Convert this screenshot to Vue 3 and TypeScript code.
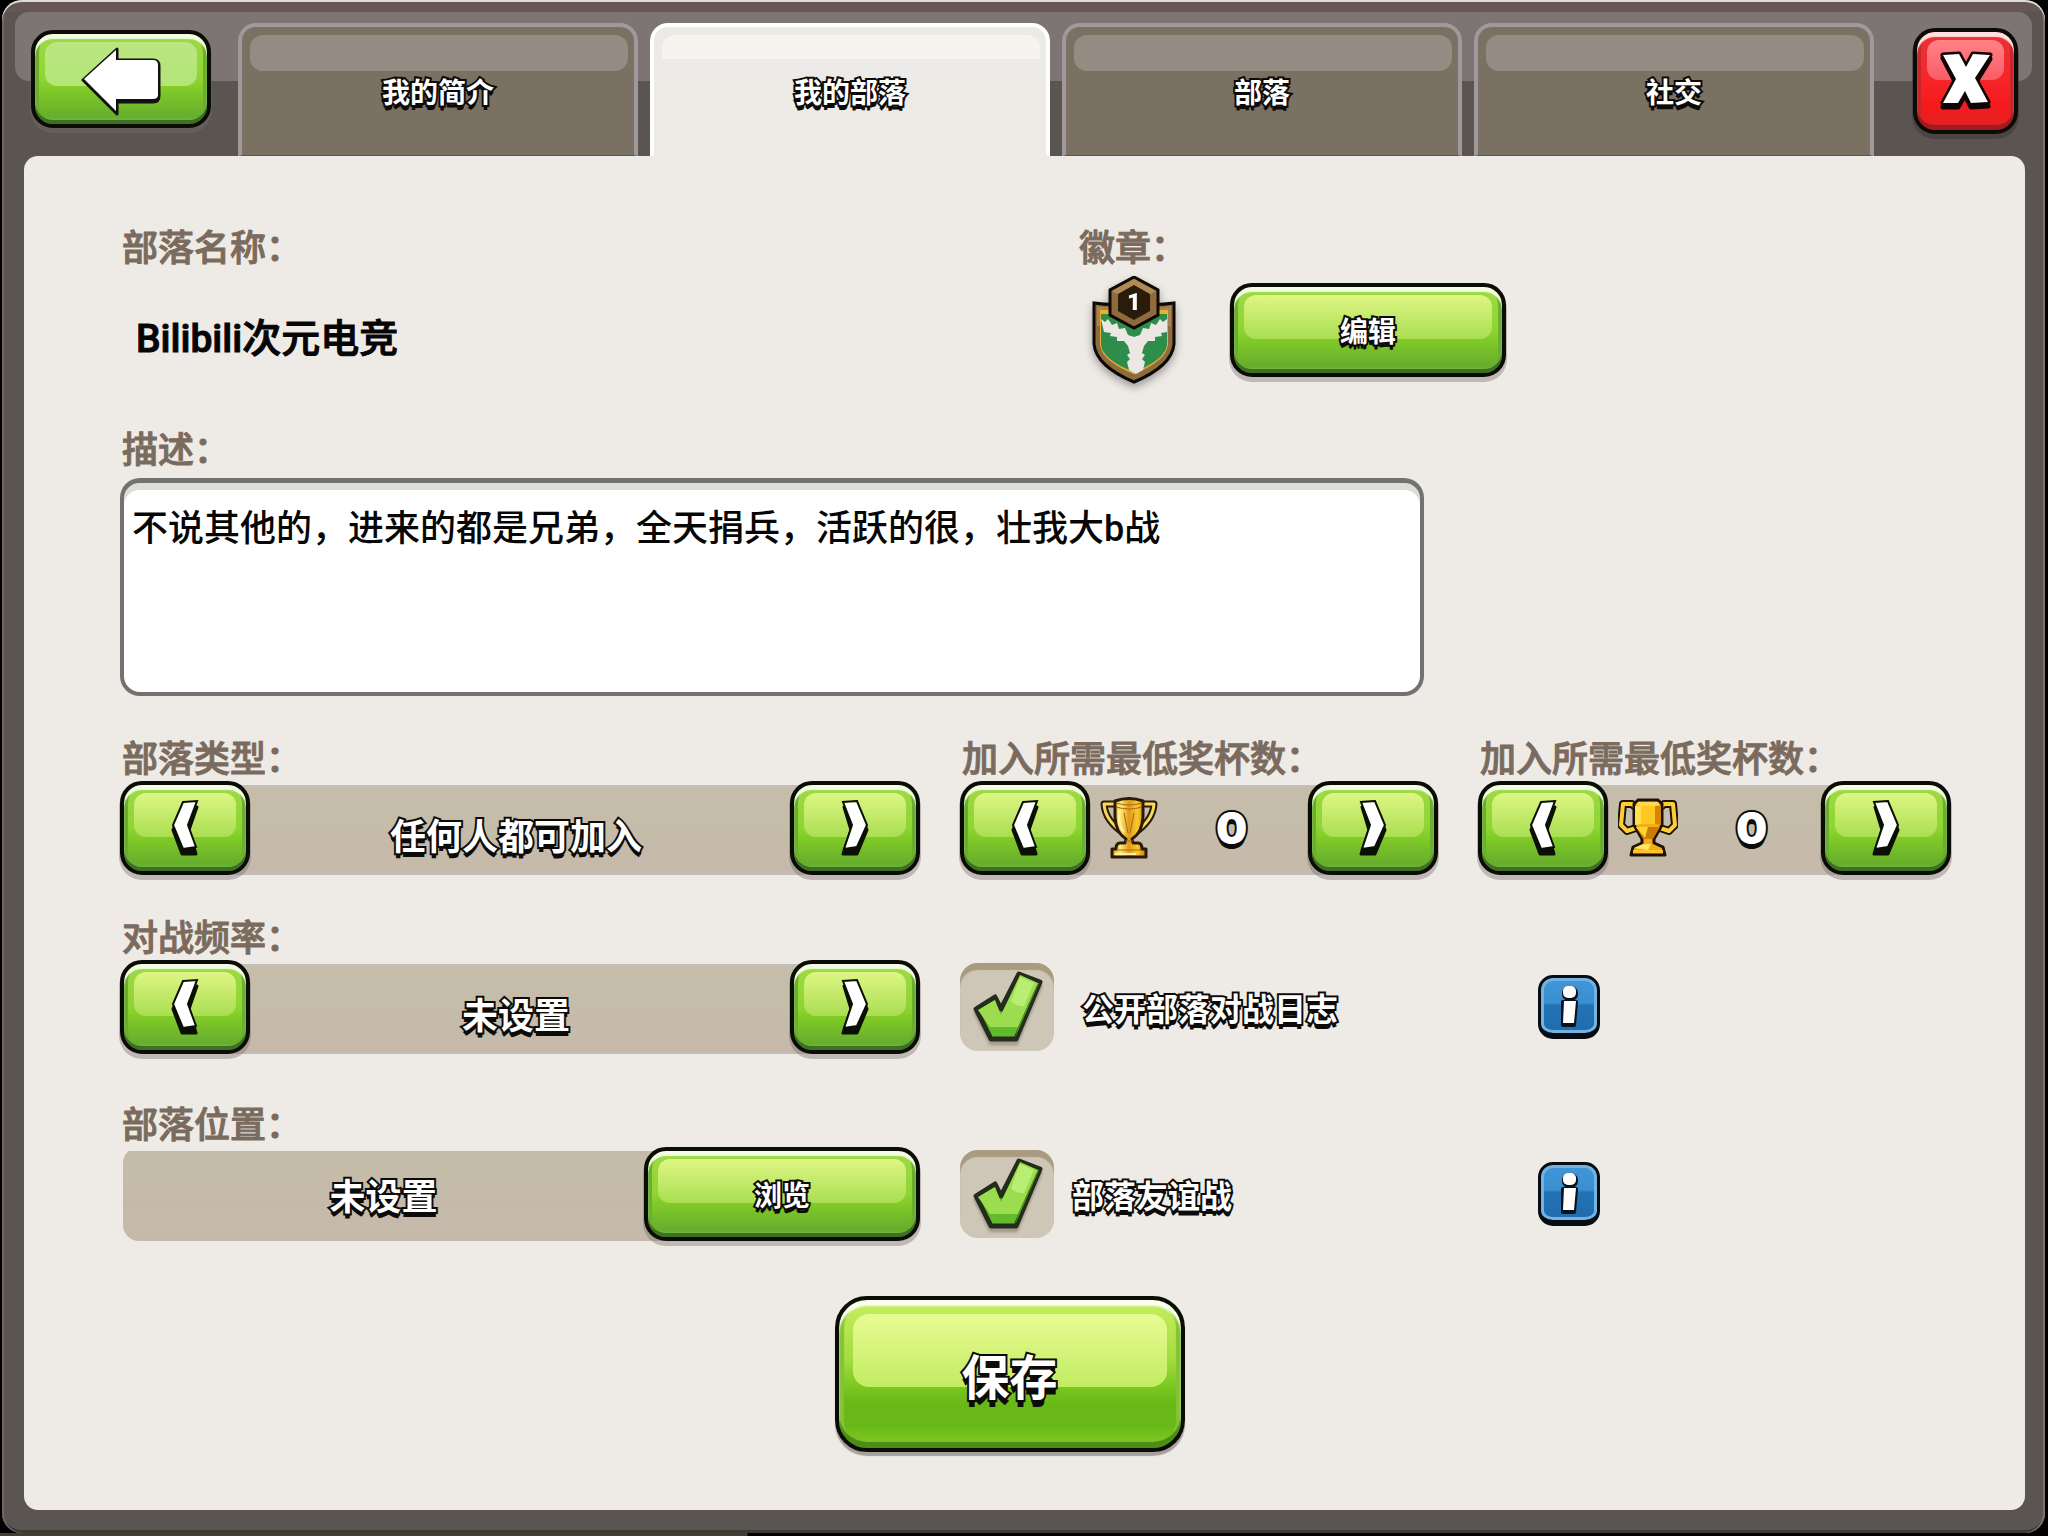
<script setup lang="ts">
import { computed, ref } from 'vue'

const tabs = ['我的简介', '我的部落', '部落', '社交']
const activeTab = ref(1)

const clanName = ref('Bilibili次元电竞')
const description = ref('不说其他的，进来的都是兄弟，全天捐兵，活跃的很，壮我大b战')

const clanTypes = ['任何人都可加入', '只有被批准才能加入', '不可加入']
const warFrequencies = ['未设置', '始终', '每周两次', '每周一次', '很少', '从不']
const typeIndex = ref(0)
const warIndex = ref(0)
const homeTrophies = ref(0)
const builderTrophies = ref(0)
const clanLocation = ref('未设置')
const publicWarLog = ref(true)
const friendlyWar = ref(true)

const clanType = computed(() => clanTypes[typeIndex.value])
const warFrequency = computed(() => warFrequencies[warIndex.value])

function cycle(index: number, step: number, length: number): number {
  return (index + step + length) % length
}
function stepTrophies(value: number, step: number): number {
  return Math.max(0, value + step * 100)
}
</script>

<template>
  <div class="page">
    <svg class="sprite" width="0" height="0" aria-hidden="true">
      <symbol id="chevron-left" viewBox="0 0 30 58">
        <path d="M12 8H27L19 31 26 55H12L3 31z" fill="#0b0f06" stroke="#0b0f06" stroke-width="3" stroke-linejoin="round" />
        <path d="M13 3 27 2 18 26 26 48 13 50 3 26z" fill="#fff" stroke="#0b0f06" stroke-width="2" />
      </symbol>
      <symbol id="chevron-right" viewBox="0 0 30 58">
        <path d="M18 8H4L11 31 3 55H17L27 31z" fill="#0b0f06" stroke="#0b0f06" stroke-width="3" stroke-linejoin="round" />
        <path d="M17 2 3 3 12 26 4 50 17 48 27 26z" fill="#fff" stroke="#0b0f06" stroke-width="2" />
      </symbol>
      <symbol id="check" viewBox="0 0 94 88">
        <path d="M59 11 80 19 56 76H31L16 46 35 34 41 46z" fill="#62bb2c" stroke="#262c1c" stroke-width="5" stroke-linejoin="round" />
        <path d="M60 12 78 20 58 64H30L18 47 35 37 41 52z" fill="#9bdd4e" />
        <path d="M60 14 74 20 64 43Q56 44 51 38z" fill="#b8ee74" />
        <path d="M78 20 58 64 55 75 79 20z" fill="#4f9a22" />
      </symbol>
      <symbol id="info-mark" viewBox="0 0 20 44">
        <g fill="#0b1118" stroke="#0b1118" stroke-width="4">
          <rect x="5" y="4" width="12" height="11" rx="5" />
          <path d="M4 18H17L15 41H4z" stroke-linejoin="round" />
        </g>
        <rect x="4" y="2" width="13" height="12" rx="5" fill="#fff" />
        <path d="M5 17H17L15 39H4z" fill="#fff" />
      </symbol>
    </svg>

    <div class="frame">
      <header class="header">
        <button type="button" class="btn back" aria-label="返回">
          <svg width="80" height="76" viewBox="0 -6 80 76" aria-hidden="true">
            <path d="M2 33 36 2v11h36q6 0 6 6v30q0 6-6 6H36v12z" fill="#111" stroke="#111" stroke-width="3" stroke-linejoin="round" />
            <path d="M3 32 35 3v10h37q5 0 5 5v30q0 4-5 4H35v12z" fill="#fff" />
          </svg>
        </button>
        <nav class="tabs" role="tablist">
          <button
            v-for="(tab, i) in tabs"
            :key="tab"
            type="button"
            role="tab"
            class="tab"
            :class="{ active: i === activeTab }"
            :aria-selected="i === activeTab"
            @click="activeTab = i"
          >
            <span class="outlined small">{{ tab }}</span>
          </button>
        </nav>
        <button type="button" class="btn close" aria-label="关闭">
          <svg width="54" height="60" viewBox="0 0 54 60" aria-hidden="true">
            <path d="M4 7 20 7 27 19 34 7 51 8 37 31 49 55 32 56 26 44 19 56 4 56 17 32z" fill="#100404" stroke="#100404" stroke-width="5" stroke-linejoin="round" />
            <path d="M4 4 20 3 27 16 34 3 51 4 36 27 49 51 32 52 26 40 19 52 4 52 17 28z" fill="#fff" stroke="#100404" stroke-width="5" stroke-linejoin="round" paint-order="stroke" />
          </svg>
        </button>
      </header>

      <main class="panel">
        <div class="identity">
          <div>
            <label class="label" for="clan-name">部落名称：</label>
            <input id="clan-name" v-model="clanName" class="name" type="text" />
          </div>
          <div>
            <div class="label">徽章：</div>
            <div class="badge-row">
              <svg class="badge" width="84" height="108" viewBox="0 0 84 108" aria-hidden="true">
                <path d="M2 27Q22 30 42 27 62 30 82 27V68Q80 90 42 106 4 90 2 68z" fill="#8e6c3e" stroke="#0d0a06" stroke-width="3" />
                <path d="M5 30Q22 33 42 31 62 33 79 30V50H5z" fill="#a8834f" />
                <path d="M8 34H76V69Q74 85 42 98 10 85 8 69z" fill="#e9b032" />
                <path d="M9 38H75V69Q73 84 42 96 11 84 9 69z" fill="#2f8d4b" />
                <path d="M9 43l4 3 3-3 4 6 5-2 2 6 6-1 3 7 6 2 6-2 3-7 6 1 2-6 5 2 4-6 3 3 4-3v13l-6 1 1 3-7 1 0 4-7 0-4 5-2 7 3 2-3 4 3 3-2 8-7 4-7-4-2-8 3-3-3-4 3-2-2-7-4-5-7 0 0-4-7-1 1-3-7-1z" fill="#ece7e5" />
                <path d="M42 1 66 14V39L42 52 18 39V14z" fill="#8f6a3c" stroke="#0d0a06" stroke-width="3" />
                <path d="M42 3 64 15 57 19 42 10 27 19 20 15z" fill="#b08a56" />
                <path d="M42 9 58 18V35L42 44 26 35V18z" fill="#2a1b0b" />
                <text x="42" y="34" text-anchor="middle" class="badge-level">1</text>
              </svg>
              <button type="button" class="btn medium"><span class="outlined small">编辑</span></button>
            </div>
          </div>
        </div>

        <div class="description">
          <label class="label" for="clan-description">描述：</label>
          <textarea id="clan-description" v-model="description" class="text-area"></textarea>
        </div>

        <div class="columns types">
          <div role="group" aria-labelledby="type-label">
            <div id="type-label" class="label tight">部落类型：</div>
            <div class="stepper">
              <button type="button" class="btn arrow" aria-label="上一项" @click="typeIndex = cycle(typeIndex, -1, clanTypes.length)">
                <svg width="30" height="58" aria-hidden="true"><use href="#chevron-left" /></svg>
              </button>
              <span class="outlined value lowered">{{ clanType }}</span>
              <button type="button" class="btn arrow" aria-label="下一项" @click="typeIndex = cycle(typeIndex, 1, clanTypes.length)">
                <svg width="30" height="58" aria-hidden="true"><use href="#chevron-right" /></svg>
              </button>
            </div>
          </div>

          <div role="group" aria-labelledby="home-label">
            <div id="home-label" class="label tight">加入所需最低奖杯数：</div>
            <div class="stepper">
              <button type="button" class="btn arrow" aria-label="减少" @click="homeTrophies = stepTrophies(homeTrophies, -1)">
                <svg width="30" height="58" aria-hidden="true"><use href="#chevron-left" /></svg>
              </button>
              <div class="trophies">
                <svg width="58" height="62" viewBox="0 0 58 62" aria-hidden="true">
                  <defs>
                    <linearGradient id="gold" x1="0" x2="1">
                      <stop offset="0" stop-color="#e2a51b" />
                      <stop offset=".25" stop-color="#ffe978" />
                      <stop offset=".5" stop-color="#e09a18" />
                      <stop offset=".75" stop-color="#f9c92f" />
                      <stop offset="1" stop-color="#c67c0c" />
                    </linearGradient>
                  </defs>
                  <g fill="none" stroke-linejoin="round">
                    <path d="M16 7H4Q5 24 25 37M42 7H54Q53 24 33 37" stroke="#2a1a08" stroke-width="7" />
                    <path d="M16 7H4Q5 24 25 37M42 7H54Q53 24 33 37" stroke="#f8d95c" stroke-width="3" />
                  </g>
                  <path d="M15 4Q29-1 43 4V20Q42 36 32 42L33 46H38Q42 46 42 52H46V60H12V52H16Q16 46 20 46H25L26 42Q16 36 15 20z" fill="url(#gold)" stroke="#2a1a08" stroke-width="3" stroke-linejoin="round" />
                  <path d="M16 6Q29 10 42 6M16 10Q29 14 42 10M24 16 28 36M34 16 30 36M25 44H33M16 53H42" fill="none" stroke="#a9680d" stroke-width="1" />
                  <path d="M19 13V24Q21 31 24 35M15 57H36" fill="none" stroke="#fff3a0" stroke-width="2" />
                </svg>
                <span class="outlined number">{{ homeTrophies }}</span>
              </div>
              <button type="button" class="btn arrow" aria-label="增加" @click="homeTrophies = stepTrophies(homeTrophies, 1)">
                <svg width="30" height="58" aria-hidden="true"><use href="#chevron-right" /></svg>
              </button>
            </div>
          </div>

          <div role="group" aria-labelledby="builder-label">
            <div id="builder-label" class="label tight">加入所需最低奖杯数：</div>
            <div class="stepper">
              <button type="button" class="btn arrow" aria-label="减少" @click="builderTrophies = stepTrophies(builderTrophies, -1)">
                <svg width="30" height="58" aria-hidden="true"><use href="#chevron-left" /></svg>
              </button>
              <div class="trophies">
                <svg width="60" height="60" viewBox="0 0 60 60" aria-hidden="true">
                  <g fill="none" stroke-linejoin="round">
                    <path d="M17 9 14 6H5L3 27 9 33 18 30M43 9 46 6H55L57 27 51 33 42 30" stroke="#1d1206" stroke-width="8" />
                    <path d="M17 9 14 6H5L3 27 9 33 18 30M43 9 46 6H55L57 27 51 33 42 30" stroke="#ffce35" stroke-width="4" />
                  </g>
                  <path d="M20 2H40L44 6V27L36 41V45L45 49 47 57H13L15 49 24 45V41L16 27V6z" fill="#f5ae12" stroke="#1d1206" stroke-width="3" stroke-linejoin="round" />
                  <path d="M20 4H40L42 7 37 8H23L18 7z" fill="#ffd84d" />
                  <path d="M23 8H37V26H23z" fill="#ffc721" />
                  <path d="M17 8 23 8V26L17 27z" fill="#ffe04d" />
                  <path d="M37 8H43V27L37 26z" fill="#d98407" />
                  <path d="M18 29H42L35 41H25z" fill="#c97b08" />
                  <path d="M18 29H30L27 40z" fill="#ffd22e" />
                  <path d="M16 50 25 46H33L30 52z" fill="#ffe561" />
                  <path d="M15 52H45V55H15z" fill="#ffc327" />
                </svg>
                <span class="outlined number">{{ builderTrophies }}</span>
              </div>
              <button type="button" class="btn arrow" aria-label="增加" @click="builderTrophies = stepTrophies(builderTrophies, 1)">
                <svg width="30" height="58" aria-hidden="true"><use href="#chevron-right" /></svg>
              </button>
            </div>
          </div>
        </div>

        <div class="columns war">
          <div role="group" aria-labelledby="war-label">
            <div id="war-label" class="label tight">对战频率：</div>
            <div class="stepper">
              <button type="button" class="btn arrow" aria-label="上一项" @click="warIndex = cycle(warIndex, -1, warFrequencies.length)">
                <svg width="30" height="58" aria-hidden="true"><use href="#chevron-left" /></svg>
              </button>
              <span class="outlined value lowered">{{ warFrequency }}</span>
              <button type="button" class="btn arrow" aria-label="下一项" @click="warIndex = cycle(warIndex, 1, warFrequencies.length)">
                <svg width="30" height="58" aria-hidden="true"><use href="#chevron-right" /></svg>
              </button>
            </div>
          </div>
          <div class="option">
            <label class="toggle wide">
              <input v-model="publicWarLog" type="checkbox" class="sr-only" />
              <span class="box">
                <svg v-if="publicWarLog" width="94" height="88" aria-hidden="true"><use href="#check" /></svg>
              </span>
              <span class="outlined caption">公开部落对战日志</span>
            </label>
            <button type="button" class="info" aria-label="公开部落对战日志说明">
              <svg width="20" height="44" aria-hidden="true"><use href="#info-mark" /></svg>
            </button>
          </div>
        </div>

        <div class="columns location">
          <div role="group" aria-labelledby="location-label">
            <div id="location-label" class="label tight">部落位置：</div>
            <div class="stepper rounded">
              <span class="outlined value">{{ clanLocation }}</span>
              <button type="button" class="btn medium"><span class="outlined small">浏览</span></button>
            </div>
          </div>
          <div class="option">
            <label class="toggle">
              <input v-model="friendlyWar" type="checkbox" class="sr-only" />
              <span class="box">
                <svg v-if="friendlyWar" width="94" height="88" aria-hidden="true"><use href="#check" /></svg>
              </span>
              <span class="outlined caption">部落友谊战</span>
            </label>
            <button type="button" class="info" aria-label="部落友谊战说明">
              <svg width="20" height="44" aria-hidden="true"><use href="#info-mark" /></svg>
            </button>
          </div>
        </div>

        <div class="actions">
          <button type="button" class="btn save"><span class="outlined large">保存</span></button>
        </div>
      </main>
    </div>
  </div>
</template>

<style>
body {
  margin: 0;
  background: #000;
}
</style>

<style scoped>
.page {
  box-sizing: border-box;
  min-height: 100vh;
  display: flex;
  padding: 0 3px 4px 2px;
  background: linear-gradient(#3e422c, #3e422c) left bottom / 36.5% 4px no-repeat #000;
  font-family: "Noto Sans CJK SC", sans-serif;
}
.page *,
.page *::before,
.page *::after {
  box-sizing: border-box;
}
.sprite {
  position: absolute;
}
.frame {
  flex: 1;
  min-width: 0;
  display: flex;
  flex-direction: column;
  padding: 0 20px 23px 22px;
  border-radius: 20px;
  background: linear-gradient(#665754 0, #665754 12px, #5b5552 12px);
  box-shadow: inset 0 2px 0 #dedad6, inset 2px 0 0 #6e6763, inset -2px 0 0 #7a7370, inset 0 -3px 0 #3d3937;
}
.header {
  position: relative;
  z-index: 0;
  height: 156px;
  display: flex;
  align-items: flex-start;
  padding: 0 7px;
}
.header::before {
  content: "";
  position: absolute;
  z-index: -1;
  top: 12px;
  left: -9px;
  right: -7px;
  height: 69px;
  border-radius: 14px;
  background: #7c7573;
}
.tabs {
  flex: 1;
  display: flex;
  gap: 12px;
  margin: 23px 39px 0 27px;
}
.tab {
  position: relative;
  flex: 1;
  height: 133px;
  padding: 0;
  border: 4px solid #a0989a;
  border-bottom: 1px solid #5f574e;
  border-radius: 18px 18px 0 0;
  background: #7b7162;
  font-family: inherit;
}
.tab::before {
  content: "";
  position: absolute;
  top: 8px;
  left: 8px;
  right: 6px;
  height: 36px;
  border-radius: 13px;
  background: #948c82;
}
.tab.active {
  border-color: #fff;
  border-bottom-color: #eeebe7;
  background: linear-gradient(#eceae7, #eeebe6);
}
.tab.active::before {
  background: linear-gradient(#f6f4ef 66%, #edecea 67%);
}

/* Outlined game lettering */
.outlined {
  position: relative;
  color: #fff;
  font-weight: 700;
  -webkit-text-stroke: 4px #0c0b09;
  paint-order: stroke fill;
  text-shadow: 0 2px 0 #0c0b09, 0 5px 0 #0c0b09;
  white-space: nowrap;
}
.small {
  font-size: 28px;
  line-height: 40px;
}
.value,
.caption {
  font-size: 36px;
  line-height: 44px;
}
.caption {
  font-size: 32px;
}
.large {
  font-size: 48px;
  line-height: 60px;
  text-shadow: 0 3px 0 #0c0b09, 0 7px 0 #0c0b09;
}
.number {
  font-family: Inter, sans-serif;
  font-size: 44px;
  font-weight: 900;
  line-height: 48px;
}

/* Glossy buttons */
.btn {
  position: relative;
  flex: none;
  display: flex;
  align-items: center;
  justify-content: center;
  padding: 0;
  border: 4px solid #0a0d05;
  border-radius: 22px;
  background: linear-gradient(#9edb45 0, #8fd435 50%, #82cc28 60%, #66ad2c 92%, #7cc650);
  box-shadow: inset 0 5px 1px #f3fbe2, inset 0 -4px 0 #3f6f24, inset 4px 0 0 #6cae2f, inset -4px 0 0 #6cae2f,
    0 4px 0 1px rgba(120, 108, 108, 0.4);
  font-family: inherit;
}
.btn::before {
  content: "";
  position: absolute;
  top: 8px;
  left: 10px;
  right: 10px;
  height: 44px;
  border-radius: 12px;
  background: linear-gradient(#def684, #aade52);
}
.btn svg {
  position: relative;
}
.back {
  width: 180px;
  height: 98px;
  margin-top: 30px;
}
.back::before {
  background: linear-gradient(#bce583, #b2e676);
}
.close {
  width: 105px;
  height: 106px;
  margin-top: 28px;
  background: linear-gradient(#ea3238, #f6252a 50%, #f61a1c 75%, #dc2424);
  box-shadow: inset 0 5px 1px #ffdfe0, inset 0 -5px 0 #a01c20, inset 4px 0 0 #c9262c, inset -4px 0 0 #c9262c,
    0 4px 0 1px rgba(60, 52, 52, 0.5);
}
.close::before {
  height: 40px;
  background: linear-gradient(#ff8288, #fb5c64);
}
.arrow {
  width: 130px;
  height: 94px;
}
.medium {
  width: 276px;
  height: 94px;
}
.save {
  width: 350px;
  height: 156px;
  border-radius: 32px;
  background: linear-gradient(#c6ee5e 0, #a4dc40 40%, #7cc820 58%, #68b818 70%, #68b818 85%, #7fc822 96%);
  box-shadow: inset 0 6px 2px #fafdf0, inset 0 -6px 1px #4d8c16, inset 5px 0 1px #84c236, inset -5px 0 1px #84c236,
    0 4px 1px rgba(120, 108, 108, 0.6);
}
.save::before {
  top: 14px;
  left: 14px;
  right: 14px;
  height: 73px;
  border-radius: 16px;
  background: linear-gradient(#e8fb94, #c2ec62);
}

/* Form */
.panel {
  flex: 1;
  padding: 69px 74px 58px 96px;
  border-radius: 14px;
  background: #eeebe6;
}
.label {
  display: block;
  margin-bottom: 11px;
  padding-left: 2px;
  color: #7b6b5e;
  font-size: 36px;
  font-weight: 500;
  line-height: 40px;
  -webkit-text-stroke: 1px #7b6b5e;
}
.label.tight {
  margin-bottom: 5px;
}
.identity {
  display: grid;
  grid-template-columns: 957fr 874fr;
}
.name {
  display: block;
  width: 80%;
  height: 60px;
  margin-top: 40px;
  padding: 0 0 0 16px;
  border: 0;
  background: transparent;
  color: #060606;
  font-family: Roboto, "Noto Sans CJK SC", sans-serif;
  font-size: 39px;
  font-weight: 500;
  -webkit-text-stroke: 1px #060606;
}
.badge-row {
  display: flex;
  align-items: center;
  gap: 54px;
  padding-left: 15px;
}
.badge {
  filter: drop-shadow(0 4px 4px rgba(60, 50, 60, 0.45));
}
.badge-level {
  fill: #fff;
  font-family: Roboto, sans-serif;
  font-size: 24px;
  font-weight: 900;
}
.description {
  margin-top: 43px;
}
.text-area {
  display: block;
  width: calc(71% + 4px);
  height: 218px;
  padding: 22px 8px;
  border: 4px solid #73726e;
  border-top-width: 5px;
  border-radius: 20px;
  background: #fff;
  box-shadow: inset 0 7px 0 #dddddb;
  color: #060606;
  font-family: Roboto, "Noto Sans CJK SC", sans-serif;
  font-size: 36px;
  font-weight: 500;
  line-height: 48px;
  resize: none;
}
.columns {
  display: grid;
  grid-template-columns: 800fr 478fr 473fr;
  column-gap: 40px;
  align-items: end;
}
.types,
.war {
  margin-top: 40px;
}
.location {
  margin-top: 48px;
}
.stepper {
  display: flex;
  align-items: center;
  justify-content: space-between;
  background: linear-gradient(#c4c0bb 0, #c5bda9 4px, #c5bca9 40px, #c6b9ab 86px, #c4bec0 90px) center 4px / calc(100% - 40px) 90px no-repeat;
}
.stepper.rounded {
  margin-left: 3px;
  border-radius: 16px 0 0 16px;
  background: linear-gradient(#c4bca8, #c6b9ab) 0 4px / calc(100% - 40px) 90px no-repeat;
}
.stepper.rounded .value {
  flex: 1;
  text-align: center;
}
.lowered {
  padding: 12px 8px 0 0;
}
.trophies {
  flex: 1;
  display: flex;
  align-items: center;
  padding-left: 10px;
  gap: 58px;
}
.option {
  grid-column: 2 / 4;
  height: 94px;
  display: grid;
  grid-template-columns: 578fr 413fr;
  align-items: center;
}
.toggle {
  display: flex;
  align-items: center;
  gap: 18px;
}
.toggle.wide {
  gap: 28px;
}
.box {
  flex: none;
  width: 94px;
  height: 88px;
  border-radius: 18px;
  background: #cec6b6;
  box-shadow: inset 0 7px 1px #a89b80;
}
.box svg {
  display: block;
  filter: drop-shadow(0 4px 1px rgba(90, 80, 70, 0.35));
}
.info {
  width: 62px;
  height: 64px;
  display: flex;
  justify-content: center;
  padding: 6px 0 0;
  border: 3px solid #070c12;
  border-bottom-width: 6px;
  border-radius: 15px;
  background: linear-gradient(#3f96d6 0, #3a8fd0 45%, #2272b4 50%, #1f6cae);
  box-shadow: inset 0 0 0 3px #73b3e0;
}
.sr-only {
  position: absolute;
  width: 1px;
  height: 1px;
  opacity: 0;
}
.actions {
  display: flex;
  justify-content: center;
  margin-top: 55px;
  padding-right: 52px;
}
</style>
